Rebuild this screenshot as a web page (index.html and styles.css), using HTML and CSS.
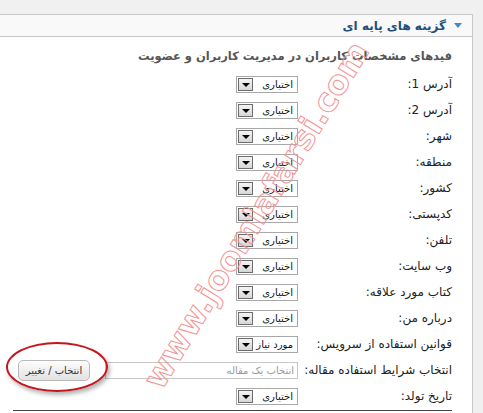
FILE: index.html
```html
<!DOCTYPE html>
<html lang="fa" dir="rtl">
<head>
    <meta charset="UTF-8">
    <title>گزینه های پایه ای</title>
    <link rel="stylesheet" href="styles.css">
</head>
<body>
    <div class="panel">
        <div class="panel-head">
            <span class="toggle"></span>
            <h3>گزینه های پایه ای</h3>
        </div>

        <div class="panel-body">
            <h4>فیدهای مشخصات کاربران در مدیریت کاربران و عضویت</h4>

            <div class="fields">
                <div class="row">
                    <label>آدرس 1:</label>
                    <div class="select"><span class="value">اختیاری</span><span class="arrow"></span></div>
                </div>
                <div class="row">
                    <label>آدرس 2:</label>
                    <div class="select"><span class="value">اختیاری</span><span class="arrow"></span></div>
                </div>
                <div class="row">
                    <label>شهر:</label>
                    <div class="select"><span class="value">اختیاری</span><span class="arrow"></span></div>
                </div>
                <div class="row">
                    <label>منطقه:</label>
                    <div class="select"><span class="value">اختیاری</span><span class="arrow"></span></div>
                </div>
                <div class="row">
                    <label>کشور:</label>
                    <div class="select"><span class="value">اختیاری</span><span class="arrow"></span></div>
                </div>
                <div class="row">
                    <label>کدپستی:</label>
                    <div class="select"><span class="value">اختیاری</span><span class="arrow"></span></div>
                </div>
                <div class="row">
                    <label>تلفن:</label>
                    <div class="select"><span class="value">اختیاری</span><span class="arrow"></span></div>
                </div>
                <div class="row">
                    <label>وب سایت:</label>
                    <div class="select"><span class="value">اختیاری</span><span class="arrow"></span></div>
                </div>
                <div class="row">
                    <label>کتاب مورد علاقه:</label>
                    <div class="select"><span class="value">اختیاری</span><span class="arrow"></span></div>
                </div>
                <div class="row">
                    <label>درباره من:</label>
                    <div class="select"><span class="value">اختیاری</span><span class="arrow"></span></div>
                </div>
                <div class="row">
                    <label>قوانین استفاده از سرویس:</label>
                    <div class="select"><span class="value">مورد نیاز</span><span class="arrow"></span></div>
                </div>
                <div class="row">
                    <label>انتخاب شرایط استفاده مقاله:</label>
                    <input class="article" type="text" placeholder="انتخاب یک مقاله">
                    <button class="pick">انتخاب / تغییر</button>
                </div>
                <div class="row">
                    <label>تاریخ تولد:</label>
                    <div class="select"><span class="value">اختیاری</span><span class="arrow"></span></div>
                </div>
            </div>
            <div class="rule"></div>
        </div>

        <div class="highlight"></div>
        <div class="watermark">www.joomlafarsi.com</div>
    </div>
</body>
</html>
```

FILE: styles.css
```css
body {
    margin: 0;
    background-color: #f0f0f0;
    font-family: 'DejaVu Sans', sans-serif;
    font-size: 11px;
    color: #333;
    overflow: hidden;
}

.panel {
    position: relative;
    width: 472px;
    height: 400px;
    margin: 14px auto 0 0;
    border-top: 1px solid #c8c8c8;
    border-right: 1px solid #c8c8c8;
    background-color: #fff;
}

.panel-head {
    display: flex;
    align-items: center;
    height: 21px;
    padding-right: 10px;
    background-color: #f9f9f9;
    border-bottom: 1px solid #c8c8c8;
}

.toggle {
    width: 0;
    height: 0;
    border-left: 4px solid transparent;
    border-right: 4px solid transparent;
    border-top: 5px solid #3d8ccc;
    margin-left: 8px;
}

.panel-head h3 {
    margin: 0;
    font-size: 12px;
    font-weight: bold;
    color: #1f4f7c;
}

.panel-body {
    padding: 9px 20px 0 13px;
}

.panel-body h4 {
    margin: 0 0 5px 0;
    line-height: 20px;
    font-size: 11.5px;
    font-weight: bold;
    color: #555;
}

.row {
    display: flex;
    align-items: center;
    height: 26px;
}

.row label {
    flex: 0 0 154px;
    font-size: 12px;
    color: #222;
}

.select {
    display: flex;
    align-items: center;
    width: 60px;
    height: 15px;
    border: 1px solid #a8a8a8;
    background-color: #fff;
}

.select .value {
    flex: 1;
    padding-right: 4px;
    font-size: 10px;
    color: #111;
}

.select .arrow {
    position: relative;
    width: 13px;
    height: 11px;
    margin: 1px;
    border: 1px solid #6d6d6d;
    background: linear-gradient(#f4f4f4, #d6d6d6);
}

.select .arrow::after {
    content: '';
    position: absolute;
    left: 3px;
    top: 4px;
    border-left: 4px solid transparent;
    border-right: 4px solid transparent;
    border-top: 4px solid #000;
}

.article {
    width: 185px;
    height: 15px;
    margin: 0;
    padding: 0 3px;
    border: 1px solid #c8c8c8;
    font-family: 'DejaVu Sans', sans-serif;
    font-size: 10px;
    direction: rtl;
}

.article::placeholder {
    color: #999;
}

.pick {
    width: 72px;
    height: 21px;
    margin-right: 15px;
    padding: 0;
    border: 1px solid #b8b8b8;
    border-radius: 5px;
    background: linear-gradient(#fdfdfd, #e2e2e2);
    font-family: 'DejaVu Sans', sans-serif;
    font-size: 10px;
    color: #333;
}

.rule {
    border-top: 1px solid #444;
    height: 0;
    margin-top: 1px;
}

.highlight {
    position: absolute;
    left: 6px;
    top: 327px;
    width: 98px;
    height: 46px;
    border: 2px solid #c4161c;
    border-radius: 50%;
    box-shadow: 2px 3px 4px rgba(0, 0, 0, 0.3);
}

.watermark {
    position: absolute;
    left: 256px;
    top: 200px;
    transform: translate(-50%, -50%) rotate(-58.5deg);
    font-family: 'DejaVu Sans', sans-serif;
    font-size: 33px;
    font-weight: bold;
    white-space: nowrap;
    direction: ltr;
    color: transparent;
    -webkit-text-stroke: 1px #f29494;
    pointer-events: none;
}
```
